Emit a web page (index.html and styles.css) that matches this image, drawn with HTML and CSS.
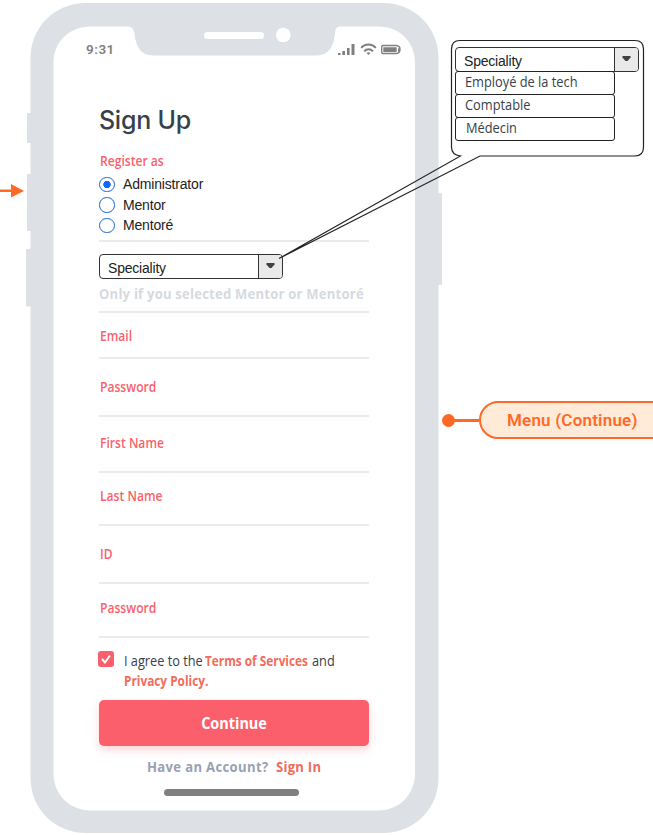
FILE: index.html
```html
<!DOCTYPE html>
<html lang="en">
<head>
<meta charset="utf-8">
<title>Sign Up</title>
<link rel="stylesheet" href="styles.css">
</head>
<body>
<main class="canvas">
  <section class="phone">
    <svg class="frame" width="418" height="835" viewBox="25 0 418 835" aria-hidden="true">
      <g fill="#dde1e6">
        <rect x="27" y="113" width="8" height="30" rx="1"/>
        <rect x="27" y="174" width="8" height="57" rx="1"/>
        <rect x="26" y="249" width="8" height="57.500" rx="1"/>
        <rect x="434" y="193" width="8" height="92" rx="1"/>
        <path d="M86 3H383C414 3 438.500 27 438.500 58V778C438.500 809 414 833 383 833H86C55 833 30.500 809 30.500 778V58C30.500 27 55 3 86 3Z"/>
      </g>
      <path fill="#fff" d="M91 26.500H128C132 26.500 134 29.500 134.500 34C136 47 141 55.500 153 55.500H317C328 55.500 333.500 47 335 34C335.500 29 336 26.500 341 26.500H378C400 26.500 415 42 415 63V773C415 794 400 810.500 378 810.500H91C69 810.500 53.500 794 53.500 773V63C53.500 42 69 26.500 91 26.500Z"/>
      <rect x="204" y="32" width="60" height="7" rx="3.500" fill="#fff"/>
      <circle cx="283.300" cy="35" r="7.300" fill="#fff"/>
    </svg>
    <div class="screen">
      <header class="status">
        <span class="clock">9:31</span>
        <svg width="64" height="12" viewBox="337 43 64 12" fill="#808080" aria-hidden="true">
          <path d="M338 53h2.500v2H338zM342.300 51h2.700v4h-2.700zM347 48h2.600v7H347zM351.500 44h3v11h-3z"/>
          <g fill="none" stroke="#808080" stroke-width="2">
            <path d="M361.200 47.800C365 43.300 372 43.300 375.800 47.800M364.200 51.300C366.500 48.600 370.700 48.600 373 51.300"/>
            <path stroke-width="1.400" d="M383 45.500H396.500Q400 46 400 49.500T396.500 53.500H383Q381.700 53.500 381.700 52V47Q381.700 45.500 383 45.500Z"/>
          </g>
          <path d="M366.500 53Q368.500 51.600 370.500 53L368.500 55ZM383.300 47.200H396.700V52H383.300ZM398 48l2 1v2l-2 1z"/>
        </svg>
      </header>
      <form class="form">
        <h1>Sign Up</h1>
        <div class="roles">
          <span class="label reg">Register as</span>
          <label class="radio"><i class="dot on"></i>Administrator</label>
          <label class="radio"><i class="dot"></i>Mentor</label>
          <label class="radio"><i class="dot"></i>Mentoré</label>
        </div>
        <div class="special">
          <div class="select"><span>Speciality</span><b><svg width="9" height="6"><path d="M1 0h7l1 1-3.500 4h-2L0 1z" fill="#404040"/></svg></b></div>
          <p class="hint">Only if you selected Mentor or Mentoré</p>
        </div>
        <div class="field email"><span class="label">Email</span></div>
        <div class="field pass"><span class="label">Password</span></div>
        <div class="field first"><span class="label">First Name</span></div>
        <div class="field last"><span class="label">Last Name</span></div>
        <div class="field ident"><span class="label">ID</span></div>
        <div class="field again"><span class="label">Password</span></div>
        <div class="terms">
          <svg width="16" height="16" aria-hidden="true"><rect width="16" height="16" rx="3" fill="#fb5f6c"/><path d="M4 8l3 3.500L12 4.500" fill="none" stroke="#fff" stroke-width="2"/></svg>
          <div>
            <p class="line"><span class="agree">I agree to the</span><strong class="tos">Terms of Services</strong><span class="and">and</span></p>
            <p class="line"><strong>Privacy Policy.</strong></p>
          </div>
        </div>
        <button type="button" class="continue"><span>Continue</span></button>
        <p class="account"><span>Have an Account?</span><strong>Sign In</strong></p>
      </form>
      <div class="home"></div>
    </div>
  </section>
  <svg class="callout" width="653" height="270" viewBox="0 0 653 270" aria-hidden="true">
    <path d="M460.500 156Q451.500 155 451.500 147V49Q451.500 40.500 460 40.500H635Q643.500 40.500 643.500 49V147Q643.500 156 635 156H480L279 258.500Z" fill="none" stroke="#222" stroke-width="1.200"/>
  </svg>
  <section class="dropdown">
    <div class="select"><span>Speciality</span><b><svg width="9" height="6"><path d="M1 0h7l1 1-3.500 4h-2L0 1z" fill="#404040"/></svg></b></div>
    <ul><li><span>Employé de la tech</span></li><li><span>Comptable</span></li><li><span class="inset">Médecin</span></li></ul>
  </section>
  <svg class="arrow" width="24" height="14" aria-hidden="true"><path d="M0 5.500h11V0l13 7-13 6.500V8H0z" fill="#ff6928"/></svg>
  <div class="menu"><i></i><u></u><span>Menu (Continue)</span></div>
</main>
</body>
</html>
```
FILE: styles.css
```css
* { box-sizing: border-box; }
body { margin: 0; background: #fff; font-family: "Open Sans", sans-serif; }
h1, p, ul { margin: 0; padding: 0; font-weight: 400; }
.canvas { position: relative; width: 653px; height: 835px; overflow: hidden; }
.phone { position: absolute; left: 25px; top: 0; width: 418px; height: 835px; }
.frame { position: absolute; left: 0; top: 0; }
.screen { position: relative; display: flex; flex-direction: column; height: 835px; padding: 39px 42px 0 61px; }
.status { display: flex; align-items: center; justify-content: space-between; height: 20px; }
.clock { font: 600 13.500px/20px Roboto, sans-serif; color: #808080; letter-spacing: .5px; }
.form { width: 270px; margin-left: 13.400px; }
h1 { height: 90px; padding-top: 46px; margin-left: -.500px; font: 500 25px/30px Inter, sans-serif; letter-spacing: -.2px; color: #36414b; white-space: nowrap; }
.roles { height: 93px; border-bottom: 2px solid #ebebeb; }
.label { display: block; width: max-content; margin-left: .3px; font-size: 14.500px; line-height: 20px; font-weight: 650; color: #fb5f6c; white-space: nowrap; transform: scaleX(.835); transform-origin: 0 50%; }
.reg { padding-top: 2px; height: 25px; }
.radio { display: flex; align-items: center; gap: 8.500px; height: 20.500px; margin-left: -.4px; font: 14px/20px "Liberation Sans", sans-serif; letter-spacing: -.18px; color: #222; }
.dot { width: 15.500px; height: 15.500px; border: 1.800px solid #1d62d6; border-radius: 50%; }
.on { background: radial-gradient(circle, #1466ff 0 3.400px, #fff 4px); }
.special { height: 71px; border-bottom: 2px solid #ebebeb; padding-top: 12px; }
.select { display: flex; width: 184px; height: 24.500px; border: 1.300px solid #333; border-radius: 4px; overflow: hidden; background: #fff; font: 14px/26px "Liberation Sans", sans-serif; letter-spacing: -.2px; color: #222; }
.select span { flex: 1; padding-left: 8px; }
.select b { display: flex; align-items: center; justify-content: center; width: 24px; border-left: 1px solid #333; background: #e9e9e9; }
.special .select { margin-left: -.4px; }
.hint { width: max-content; margin-top: 5px; font-size: 14.500px; line-height: 20px; font-weight: 700; letter-spacing: .25px; color: #d5dadf; white-space: nowrap; transform: scaleX(.9); transform-origin: 0 50%; }
.field { border-bottom: 2px solid #ebebeb; }
.email { height: 46px; padding-top: 13px; }
.pass { height: 58px; padding-top: 18px; }
.first { height: 56px; padding-top: 16px; }
.last { height: 53px; padding-top: 13px; }
.ident { height: 58px; padding-top: 18px; }
.again { height: 54px; padding-top: 14px; }
.terms { display: flex; gap: 9.500px; height: 62px; padding-top: 13px; margin-left: -1px; font-size: 14px; line-height: 20px; color: #36414b; white-space: nowrap; }
.line { display: flex; }
.line > * { transform-origin: 0 50%; }
.line strong { color: #f26b5b; transform: scaleX(.845); }
.agree, .and { transform: scaleX(.91); }
.agree { margin-right: -5px; }
.tos { margin-right: -15.500px; }
.continue { display: block; width: 270px; height: 46px; margin-left: -.9px; padding: 0; border: 0; border-radius: 5px; background: #fb5f6c; box-shadow: 0 4px 9px #fb5f6c40; color: #fff; font: 700 16px/46px "Open Sans", sans-serif; }
.continue span { display: block; transform: scaleX(.9); }
.account { display: flex; margin: 11px 0 0 48px; font-size: 14.500px; line-height: 20px; color: #98a1b3; white-space: nowrap; }
.account > * { font-weight: 700; transform-origin: 0 50%; transform: scaleX(.9); }
.account span { letter-spacing: .4px; margin-right: -6px; }
.account strong { color: #f26b5b; letter-spacing: .3px; }
.home { width: 135px; height: 7px; margin: 11.500px 0 0 78px; border-radius: 4px; background: #808080; }
.callout { position: absolute; left: 0; top: 0; }
.dropdown { position: absolute; left: 455px; top: 47px; width: 184px; }
ul { list-style: none; width: 160px; margin-top: -1px; }
li { height: 24px; margin-bottom: -1px; border: 1.300px solid #222; border-radius: 3px; padding-left: 9px; font-size: 14px; line-height: 20px; color: #36414b; white-space: nowrap; }
li span { display: block; width: max-content; font-weight: 450; transform: scaleX(.915); transform-origin: 0 50%; }
.inset { margin-left: 1px; }
.arrow { position: absolute; left: 0; top: 184px; }
.menu { position: absolute; left: 442px; top: 401px; display: flex; align-items: center; }
.menu i { width: 13px; height: 13px; border-radius: 50%; background: #ff6928; }
.menu u { width: 25px; height: 3px; margin-left: -1px; background: #ff6928; }
.menu span { width: 220px; height: 38px; border: 2px solid #ff6928; border-radius: 19px; padding-left: 26px; background: #ffebd8; color: #ff6928; font: 600 17px/35px Roboto, sans-serif; letter-spacing: .2px; white-space: nowrap; }
```
